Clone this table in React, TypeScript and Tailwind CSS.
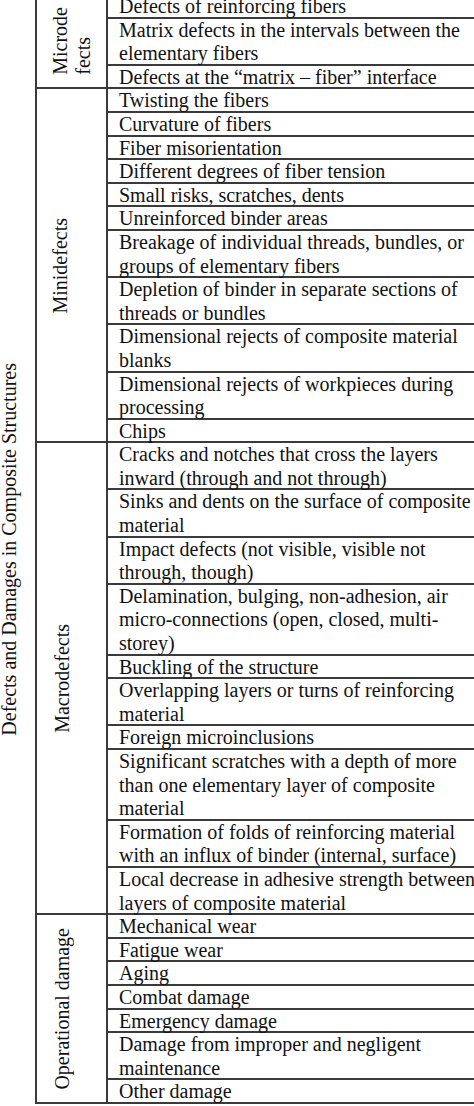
const groups = [
  {
    label: ['Microde', 'fects'],
    pad: 'justify-center',
    rows: [
      ['Defects of reinforcing fibers'],
      ['Matrix defects in the intervals between the', 'elementary fibers'],
      ['Defects at the “matrix – fiber” interface'],
    ],
  },
  {
    label: ['Minidefects'],
    pad: 'pl-[12px]',
    rows: [
      ['Twisting the fibers'],
      ['Curvature of fibers'],
      ['Fiber misorientation'],
      ['Different degrees of fiber tension'],
      ['Small risks, scratches, dents'],
      ['Unreinforced binder areas'],
      ['Breakage of individual threads, bundles, or', 'groups of elementary fibers'],
      ['Depletion of binder in separate sections of', 'threads or bundles'],
      ['Dimensional rejects of composite material', 'blanks'],
      ['Dimensional rejects of workpieces during', 'processing'],
      ['Chips'],
    ],
  },
  {
    label: ['Macrodefects'],
    pad: 'pl-[14px]',
    rows: [
      ['Cracks and notches that cross the layers', 'inward (through and not through)'],
      ['Sinks and dents on the surface of composite', 'material'],
      ['Impact defects (not visible, visible not', 'through, though)'],
      ['Delamination, bulging, non-adhesion, air', 'micro-connections (open, closed, multi-', 'storey)'],
      ['Buckling of the structure'],
      ['Overlapping layers or turns of reinforcing', 'material'],
      ['Foreign microinclusions'],
      ['Significant scratches with a depth of more', 'than one elementary layer of composite', 'material'],
      ['Formation of folds of reinforcing material', 'with an influx of binder (internal, surface)'],
      ['Local decrease in adhesive strength between', 'layers of composite material'],
    ],
  },
  {
    label: ['Operational damage'],
    pad: 'pl-[14px]',
    rows: [
      ['Mechanical wear'],
      ['Fatigue wear'],
      ['Aging'],
      ['Combat damage'],
      ['Emergency damage'],
      ['Damage from improper and negligent', 'maintenance'],
      ['Other damage'],
    ],
  },
];

const rowHeight: Record<number, string> = {
  1: 'h-[23.6px]',
  2: 'h-[47.2px]',
  3: 'h-[70.8px]',
};

export default function App() {
  return (
    <div className="w-[474px] h-[1106px] overflow-hidden bg-white text-[#111] text-[20px] font-['Liberation_Serif','Times_New_Roman',serif]">
      <div className="flex w-[600px] mt-[-5px]">
        <div className="w-[37px] shrink-0 flex items-center border-r-2 border-[#3a3a3a]">
          <span className="[writing-mode:vertical-rl] rotate-180 whitespace-nowrap leading-[23.6px] ml-[-2.5px]">
            Defects and Damages in Composite Structures
          </span>
        </div>
        <div className="flex-1 flex flex-col">
          {groups.map((g) => (
            <div key={g.label.join('')} className="flex">
              <div className={`w-[71px] shrink-0 flex items-center border-r-2 border-b-2 border-[#3a3a3a] ${g.pad}`}>
                <span className="[writing-mode:vertical-rl] rotate-180 whitespace-nowrap leading-[23px]">
                  {g.label.map((l, i) => (
                    <span key={i}>
                      {i > 0 && <br />}
                      {l}
                    </span>
                  ))}
                </span>
              </div>
              <div className="flex-1 flex flex-col">
                {g.rows.map((lines) => (
                  <div
                    key={lines[0]}
                    className={`${rowHeight[lines.length]} border-b-2 border-[#3a3a3a] pl-[11px] leading-[23.6px] whitespace-nowrap`}
                  >
                    {lines.map((l) => (
                      <div key={l}>{l}</div>
                    ))}
                  </div>
                ))}
              </div>
            </div>
          ))}
        </div>
      </div>
    </div>
  );
}
